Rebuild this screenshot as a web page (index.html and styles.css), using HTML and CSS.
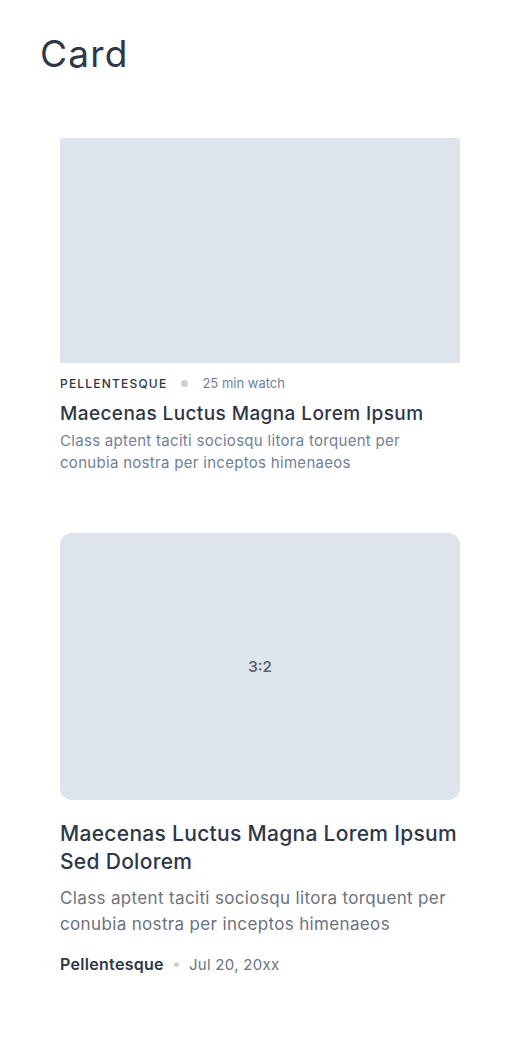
FILE: index.html
```html
<!DOCTYPE html>
<html>
<head>
<meta charset="utf-8">
<link rel="stylesheet" href="styles.css">
</head>
<body>
<main class="page">
  <h1 class="page-title">Card</h1>
  <article class="card card-a">
    <div class="media media-wide"></div>
    <div class="meta-a">
      <span class="cat">PELLENTESQUE</span>
      <span class="dot"></span>
      <span class="time">25 min watch</span>
    </div>
    <h2 class="title-a">Maecenas Luctus Magna Lorem Ipsum</h2>
    <p class="desc-a">Class aptent taciti sociosqu litora torquent per conubia nostra per inceptos himenaeos</p>
  </article>
  <article class="card card-b">
    <div class="media media-32"><span>3:2</span></div>
    <h2 class="title-b">Maecenas Luctus Magna Lorem Ipsum Sed Dolorem</h2>
    <p class="desc-b">Class aptent taciti sociosqu litora torquent per conubia nostra per inceptos himenaeos</p>
    <div class="meta-b">
      <span class="author">Pellentesque</span>
      <span class="dot small"></span>
      <span class="date">Jul 20, 20xx</span>
    </div>
  </article>
</main>
</body>
</html>
```
FILE: styles.css
```css
* { box-sizing: border-box; }
html, body { margin: 0; padding: 0; background: #fff; }
body { font-family: Inter, "Noto Sans", sans-serif; color: #2d3748; }
.page { padding: 32px 40px 40px; }
.page-title {
  margin: 0;
  font-family: Inter, sans-serif;
  font-weight: 400;
  font-size: 37px;
  line-height: 44px;
  color: #2d3748;
  letter-spacing: 1.2px;
}
.card { margin: 0 20px; }
.card-a { margin-top: 62px; }
.media { background: #dde4ec; display: flex; align-items: center; justify-content: center; }
.media-wide { height: 225px; }
.media-32 { height: 267px; border-radius: 12px; }
.media-32 span { font-size: 15px; font-weight: 600; color: #5b6472; }
.meta-a { display: flex; align-items: center; margin-top: 13px; height: 14px; }
.cat { font-size: 12px; font-weight: 500; letter-spacing: 1.2px; color: #2d3748; }
.dot { width: 7px; height: 7px; border-radius: 50%; background: #cbd0d6; margin: 0 14px; }
.dot.small { width: 5px; height: 5px; margin: 0 10px; }
.time { font-size: 13px; color: #718096; }
.title-a { margin: 12px 0 0; font-size: 19px; font-weight: 500; line-height: 24px; color: #2d3748; letter-spacing: 0.4px; }
.desc-a { margin: 4px 0 0; font-size: 15px; line-height: 22px; color: #718096; letter-spacing: 0.3px; }
.card-b { margin-top: 59px; }
.title-b { margin: 20px 0 0; font-size: 21px; font-weight: 500; line-height: 28px; color: #2d3748; letter-spacing: 0.3px; }
.desc-b { margin: 9px 0 0; font-size: 17px; line-height: 26px; color: #6b7280; letter-spacing: 0.35px; }
.meta-b { display: flex; align-items: center; margin-top: 17px; }
.author { font-size: 16px; font-weight: 600; color: #2d3748; letter-spacing: 0.3px; }
.date { font-size: 15px; color: #6b7280; letter-spacing: 0.3px; }
```
